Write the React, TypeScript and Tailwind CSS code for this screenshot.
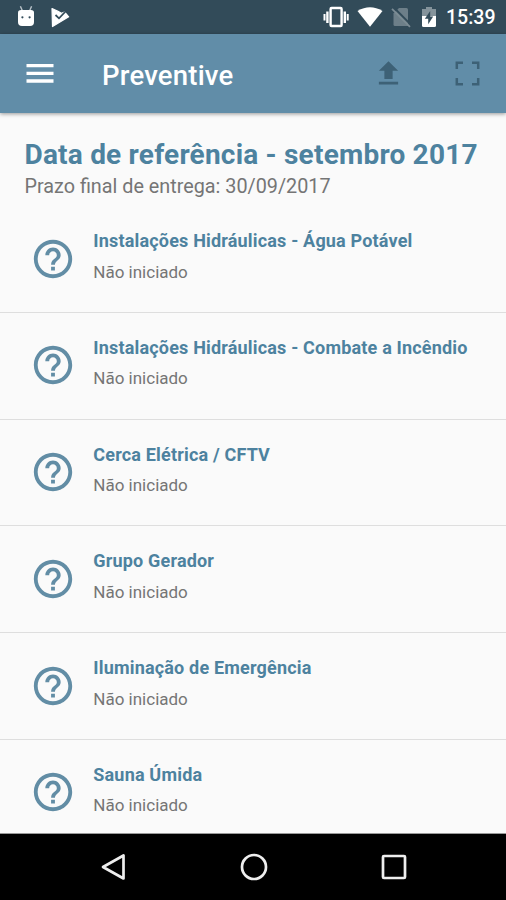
import React from "react";

const items = [
  "Instalações Hidráulicas - Água Potável",
  "Instalações Hidráulicas - Combate a Incêndio",
  "Cerca Elétrica / CFTV",
  "Grupo Gerador",
  "Iluminação de Emergência",
  "Sauna Úmida",
];

function StatusBar() {
  return (
    <header className="flex h-[34px] shrink-0 items-center bg-[#324b59] pr-[11px] pl-[17px] text-white">
      <svg className="h-[22px] w-[18px]" viewBox="0 0 18 22" fill="currentColor">
        <path d="M3.4 .3 5.5 5M14.6 .3 12.5 5" stroke="#b9c3c9" strokeWidth="1.4" />
        <path d="M1 6.5Q1 4 4 4H14Q17 4 17 6.5V16Q17 20 13 20H5Q1 20 1 16Z" />
        <circle cx="5.4" cy="11.3" r="1.1" fill="#324b59" />
        <circle cx="12.6" cy="11.3" r="1.1" fill="#324b59" />
      </svg>
      <svg className="ml-[15px] h-[22px] w-[20px]" viewBox="0 0 20 22">
        <path d="M2 2.5 8 5.4 11.5 7.2 14.5 6 18.7 10.8 2.5 20.5Z" fill="white" stroke="white" strokeWidth="1.2" strokeLinejoin="round" />
        <path d="m5.5 9 3.5 3.3 7-7.3" fill="none" stroke="#324b59" strokeWidth="1.8" />
      </svg>
      <div className="ml-auto flex items-center">
        <svg className="h-[22px] w-[27px]" viewBox="0 0 27 22" fill="none" stroke="white">
          <rect x="8.6" y="2" width="11" height="18" rx="1" strokeWidth="2.4" />
          <path d="M5.4 5.5V17M22.8 5.5V17" strokeWidth="2.4" />
          <path d="M2.5 8V14.5M25.7 8V14.5" strokeWidth="2" />
        </svg>
        <svg className="ml-[8px] h-[22px] w-[26px]" viewBox="0 0 26 22" fill="white">
          <path d="M.5 5Q13-2.5 25.5 5L13 20.8Z" />
        </svg>
        <svg className="ml-[8px] h-[22px] w-[20px]" viewBox="0 0 20 22">
          <path d="M8 2H15.5Q17 2 17 3.5V20H4Q2.5 20 2.5 18.5V7.5Z" fill="#6d7f89" />
          <path d="M1 2.8 19 20.8" stroke="#324b59" strokeWidth="2" transform="translate(1.5 -1.5)" />
          <path d="M1 2.8 19 20.8" stroke="#7c8c95" strokeWidth="1.7" />
        </svg>
        <svg className="ml-[10px] h-[22px] w-[16px]" viewBox="0 0 16 22">
          <path d="M5 1H11V3H15V10H1V3H5Z" fill="#84939b" />
          <path d="M1 10H15V19.5Q15 21 13.5 21H2.5Q1 21 1 19.5Z" fill="white" />
          <path d="M9.2 5 3.8 12.8H7.2V18.3L12.2 10.5H9.2Z" fill="#324b59" />
        </svg>
        <span className="ml-[9px] w-[49px] pt-[2px] text-[19.5px] leading-6 font-medium">15:39</span>
      </div>
    </header>
  );
}

function AppBar() {
  return (
    <div className="z-10 flex h-[79px] shrink-0 items-center bg-[#618da8] px-[26px] shadow-[0_1px_4px_rgba(0,0,0,0.4)]">
      <svg className="h-[22px] w-[28px]" viewBox="0 0 28 22" stroke="white" strokeWidth="3.3">
        <path d="M.5 2.7H27.5M.5 10.3H27.5M.5 18H27.5" />
      </svg>
      <h1 className="ml-[48px] pt-[4px] text-[27.5px] leading-8 font-medium tracking-[0.2px] whitespace-nowrap text-white">
        Preventive
      </h1>
      <svg className="ml-auto h-[33px] w-[33px]" viewBox="0 0 24 24" fill="#3d6176">
        <path d="M9 16h6v-6h4l-7-7-7 7h4zm-4 2h14v2H5z" />
      </svg>
      <svg className="ml-[50px] h-[25px] w-[25px]" viewBox="0 0 25 25" fill="none" stroke="#3d6176" strokeWidth="2.5">
        <path d="M1.8 8V1.8H8M17 1.8H23.2V8M1.8 17V23.2H8M17 23.2H23.2V17" />
      </svg>
    </div>
  );
}

export default function App() {
  return (
    <div className="flex h-[900px] w-[506px] flex-col overflow-hidden bg-[#fafafa] font-['Roboto',sans-serif]">
      <StatusBar />
      <AppBar />
      <main className="flex h-[721px] shrink-0 flex-col overflow-hidden border-b border-[#999]">
        <section className="h-[93px] shrink-0 pt-[25px] pl-[24.5px]">
          <h2 className="text-[28px] leading-[33px] font-bold tracking-[0.21px] whitespace-nowrap text-[#4d829f]">
            Data de referência - setembro 2017
          </h2>
          <p className="mt-[4px] text-[19.8px] leading-[24px] whitespace-nowrap text-[#757575]">
            Prazo final de entrega: 30/09/2017
          </p>
        </section>
        <ul>
          {items.map((title) => (
            <li key={title} className="flex h-[106.8px] border-b border-[#dedede] pl-[30px]">
              <svg className="mt-[29.5px] h-[46px] w-[46px] shrink-0" viewBox="0 0 24 24" fill="#628da5">
                <path d="M11 18h2v-2h-2v2zm1-16C6.48 2 2 6.48 2 12s4.48 10 10 10 10-4.48 10-10S17.52 2 12 2zm0 18c-4.41 0-8-3.59-8-8s3.59-8 8-8 8 3.59 8 8-3.59 8-8 8zm0-14c-2.21 0-4 1.79-4 4h2c0-1.1.9-2 2-2s2 .9 2 2c0 2-3 1.75-3 5h2c0-2.25 3-2.5 3-5 0-2.21-1.79-4-4-4z" />
              </svg>
              <div className="ml-[17.3px] pt-[24px] whitespace-nowrap">
                <h3 className="text-[18px] leading-[22px] font-bold tracking-[0.18px] text-[#4d829f]">{title}</h3>
                <p className="mt-[9.5px] text-[17px] leading-[20px] text-[#757575]">Não iniciado</p>
              </div>
            </li>
          ))}
        </ul>
      </main>
      <nav className="flex flex-1 items-center justify-between bg-black pr-[99px] pl-[100px]">
        <svg className="h-[28px] w-[26px]" viewBox="0 0 26 28" fill="none" stroke="#eee" strokeWidth="2.7" strokeLinejoin="round">
          <path d="M3 14 23.5 2.5V25.5Z" />
        </svg>
        <svg className="h-[28px] w-[28px]" viewBox="0 0 28 28" fill="none" stroke="#eee" strokeWidth="2.7">
          <circle cx="14" cy="14" r="12" />
        </svg>
        <svg className="h-[26px] w-[26px]" viewBox="0 0 26 26" fill="none" stroke="#eee" strokeWidth="2.7">
          <rect x="2" y="2" width="22" height="22" rx="1" />
        </svg>
      </nav>
    </div>
  );
}
